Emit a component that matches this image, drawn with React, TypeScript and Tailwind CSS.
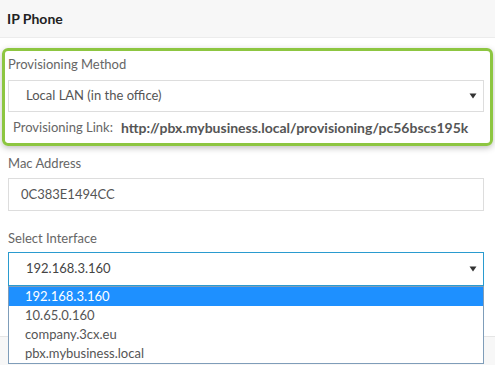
import React from 'react';

const font = { fontFamily: 'Lato, "Open Sans", sans-serif' };

function Caret() {
  return (
    <svg width="8" height="6" viewBox="0 0 8 6" className="shrink-0">
      <path d="M0.5 0.5h7L4 5.5z" fill="#333" />
    </svg>
  );
}

export default function App() {
  const options = ['192.168.3.160', '10.65.0.160', 'company.3cx.eu', 'pbx.mybusiness.local'];

  return (
    <div className="relative w-[495px] h-[365px] overflow-hidden bg-white" style={font}>
      <div className="h-[38px] bg-[#f7f7f7] border-b border-[#ececec] flex items-center px-[7px]">
        <span className="text-[14px] font-bold text-[#222]">IP Phone</span>
      </div>

      <div className="mt-[10px] mx-[2px] border-[3px] border-[#8dc641] rounded-[6px] pl-[3px] pr-[6px] pt-[1px] shadow-[0_2px_6px_rgba(0,0,0,0.25)]">
        <div className="text-[13px] text-[#666] h-[24px] leading-[24px] mb-[4px]">Provisioning Method</div>
        <div className="h-[32px] border border-[#ddd] flex items-center justify-between pl-[17px] pr-[6px] text-[13px] text-[#555]">
          <span>Local LAN (in the office)</span>
          <Caret />
        </div>
        <div className="h-[31px] flex items-center pl-[5px] text-[13px] text-[#666]">
          <span>Provisioning Link:</span>
          <span className="ml-[8px] text-[14px] font-bold text-[#555]">http://pbx.mybusiness.local/provisioning/pc56bscs195k</span>
        </div>
      </div>

      <div className="pl-[8px] pr-[11px]">
        <div className="mt-[5px] h-[24px] leading-[24px] mb-[3px] text-[13px] text-[#666]">Mac Address</div>
        <div className="h-[33px] border border-[#ddd] flex items-center pl-[12px] text-[13px] text-[#555]">0C383E1494CC</div>
        <div className="mt-[15px] h-[24px] leading-[24px] mb-[2px] text-[13px] text-[#666]">Select Interface</div>
        <div className="h-[34px] border border-[#2a9bcf] flex items-center justify-between pl-[17px] pr-[6px] text-[13px] text-[#444]">
          <span>192.168.3.160</span>
          <Caret />
        </div>
      </div>

      <div className="absolute left-0 right-0 top-[336px] bottom-0 border-t border-[#e5e5e5] bg-[#f7f7f7]" />

      <div className="absolute left-[8px] top-[286px] w-[476px] border border-[#7f9db9] bg-white text-[13px]">
        {options.map((o, i) => (
          <div
            key={o}
            className={
              i === 0
                ? 'h-[19px] leading-[19px] pl-[16px] bg-[#1e90ff] text-white'
                : 'h-[19px] leading-[19px] pl-[16px] text-[#555]'
            }
          >
            {o}
          </div>
        ))}
      </div>
    </div>
  );
}
